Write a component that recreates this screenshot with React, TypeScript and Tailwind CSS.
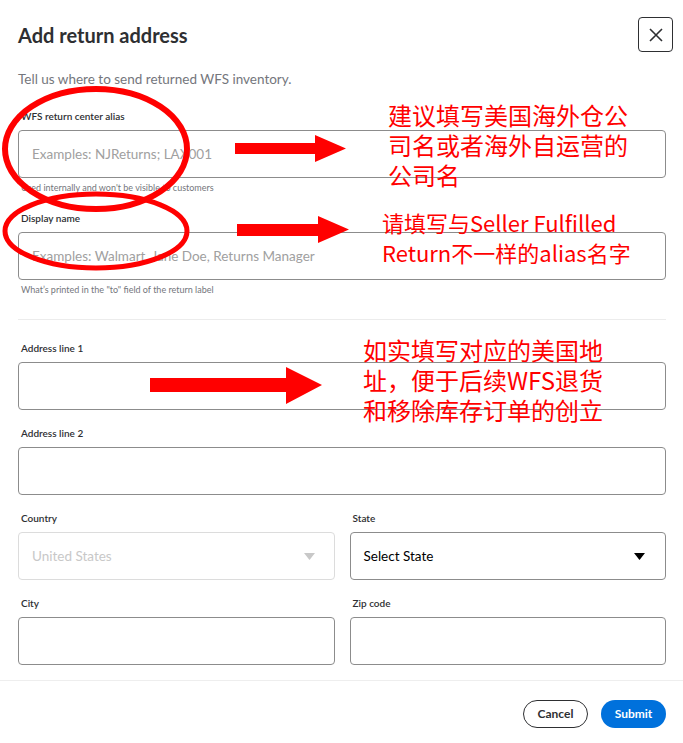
import React from 'react';

const font = { fontFamily: 'Lato, "Open Sans", "Liberation Sans", sans-serif' };

const Label: React.FC<{ text: string }> = ({ text }) => (
  <div className="h-[14px] text-[10px] leading-[14px] font-semibold text-[#2e2f32] pl-[3px]">{text}</div>
);

const Field: React.FC<{ label: string; placeholder?: string; helper?: string }> = ({ label, placeholder, helper }) => (
  <div>
    <Label text={label} />
    <input
      placeholder={placeholder}
      className="mt-[7px] w-full h-[48px] px-[13px] border border-[#8c8c8c] rounded-[4px] text-[13.5px] placeholder:text-[#a0a0a0] focus:outline-none"
      style={font}
    />
    {helper && (
      <div className="mt-[4px] h-[12px] text-[9px] leading-[12px] text-[#74767c] pl-[3px]">{helper}</div>
    )}
  </div>
);

const Triangle: React.FC<{ color: string }> = ({ color }) => (
  <svg width="11" height="7" viewBox="0 0 11 7">
    <path d="M0 0 L11 0 L5.5 7 Z" fill={color} />
  </svg>
);

const Annotations: React.FC = () => (
  <>
    <svg className="absolute left-0 top-0 pointer-events-none" width="683" height="743">
      <ellipse cx="96" cy="149" rx="91" ry="60" fill="none" stroke="#ff0000" strokeWidth="6" />
      <ellipse cx="96" cy="231" rx="91" ry="37" fill="none" stroke="#ff0000" strokeWidth="5" />
      <path d="M235 143 L315 143 L315 135 L346 148.5 L315 162 L315 154 L235 154 Z" fill="#ff0000" />
      <path d="M237 224 L318 224 L318 216 L349 229.5 L318 243 L318 236 L237 236 Z" fill="#ff0000" />
      <path d="M150 378 L286 378 L286 367 L322 385 L286 404 L286 392 L150 392 Z" fill="#ff0000" />
    </svg>
    <div
      className="absolute left-[388px] top-[100px] w-[250px] text-[24px] leading-[30px] text-[#ff0000]"
      style={{ fontFamily: '"Noto Sans CJK SC", sans-serif' }}
    >
      建议填写美国海外仓公司名或者海外自运营的公司名
    </div>
    <div
      className="absolute left-[382px] top-[207px] w-[270px] text-[22px] leading-[30px] text-[#ff0000]"
      style={{ fontFamily: '"Noto Sans CJK SC", sans-serif' }}
    >
      请填写与Seller Fulfilled<br />Return不一样的alias名字
    </div>
    <div
      className="absolute left-[363px] top-[335px] w-[250px] text-[24px] leading-[30px] text-[#ff0000]"
      style={{ fontFamily: '"Noto Sans CJK SC", sans-serif' }}
    >
      如实填写对应的美国地址，便于后续WFS退货和移除库存订单的创立
    </div>
  </>
);

const App: React.FC = () => {
  return (
    <div className="relative w-[683px] h-[743px] bg-white overflow-hidden text-[#2e2f32]" style={font}>
      {/* Header */}
      <div className="flex justify-between items-start pt-[17px] pl-[18px] pr-[10px]">
        <h1 className="mt-[6px] text-[20px] leading-[24px] font-bold text-[#2e2f32]">Add return address</h1>
        <button className="w-[35px] h-[35px] flex items-center justify-center border-[1.5px] border-[#2e2f32] rounded-[4px]">
          <svg width="16" height="16" viewBox="0 0 16 16">
            <path d="M2 2 L14 14 M14 2 L2 14" stroke="#2e2f32" strokeWidth="1.6" />
          </svg>
        </button>
      </div>

      <div className="px-[18px] pr-[17px]">
        <p className="mt-[18px] h-[18px] text-[13.5px] leading-[18px] text-[#74767c]">
          Tell us where to send returned WFS inventory.
        </p>

        <div className="mt-[21px]">
          <Field
            label="WFS return center alias"
            placeholder="Examples: NJReturns; LAX001"
            helper="Used internally and won't be visible to customers"
          />
        </div>
        <div className="mt-[17px]">
          <Field
            label="Display name"
            placeholder="Examples: Walmart, Jane Doe, Returns Manager"
            helper={'What\u2019s printed in the "to" field of the return label'}
          />
        </div>

        <div className="mt-[23px] h-px bg-[#ececec]" />

        <div className="mt-[21px]">
          <Field label="Address line 1" />
        </div>
        <div className="mt-[16px]">
          <Field label="Address line 2" />
        </div>

        <div className="mt-[16px] grid grid-cols-2 gap-x-[15px]">
          <div>
            <Label text="Country" />
            <div className="mt-[7px] h-[48px] px-[13px] flex items-center justify-between border border-[#dcdcdc] rounded-[4px]">
              <span className="text-[13.5px] text-[#c8c8c8]">United States</span>
              <span className="mr-[6px]">
                <Triangle color="#c8c8c8" />
              </span>
            </div>
          </div>
          <div>
            <Label text="State" />
            <div className="mt-[7px] h-[48px] px-[13px] flex items-center justify-between border border-[#8c8c8c] rounded-[4px]">
              <span className="text-[13.5px] text-[#000]">Select State</span>
              <span className="mr-[7px]">
                <Triangle color="#000" />
              </span>
            </div>
          </div>
        </div>

        <div className="mt-[16px] grid grid-cols-2 gap-x-[15px]">
          <Field label="City" />
          <Field label="Zip code" />
        </div>
      </div>

      {/* Footer */}
      <div className="mt-[15px] h-px bg-[#eeeeee]" />
      <div className="flex justify-end gap-[13px] pt-[19px] pr-[17px]">
        <button className="w-[65px] h-[28px] rounded-full border border-[#2e2f32] text-[12px] font-bold text-[#2e2f32]">
          Cancel
        </button>
        <button className="w-[65px] h-[28px] rounded-full bg-[#0071dc] text-[12px] font-bold text-white">
          Submit
        </button>
      </div>

      <Annotations />
    </div>
  );
};

export default App;
